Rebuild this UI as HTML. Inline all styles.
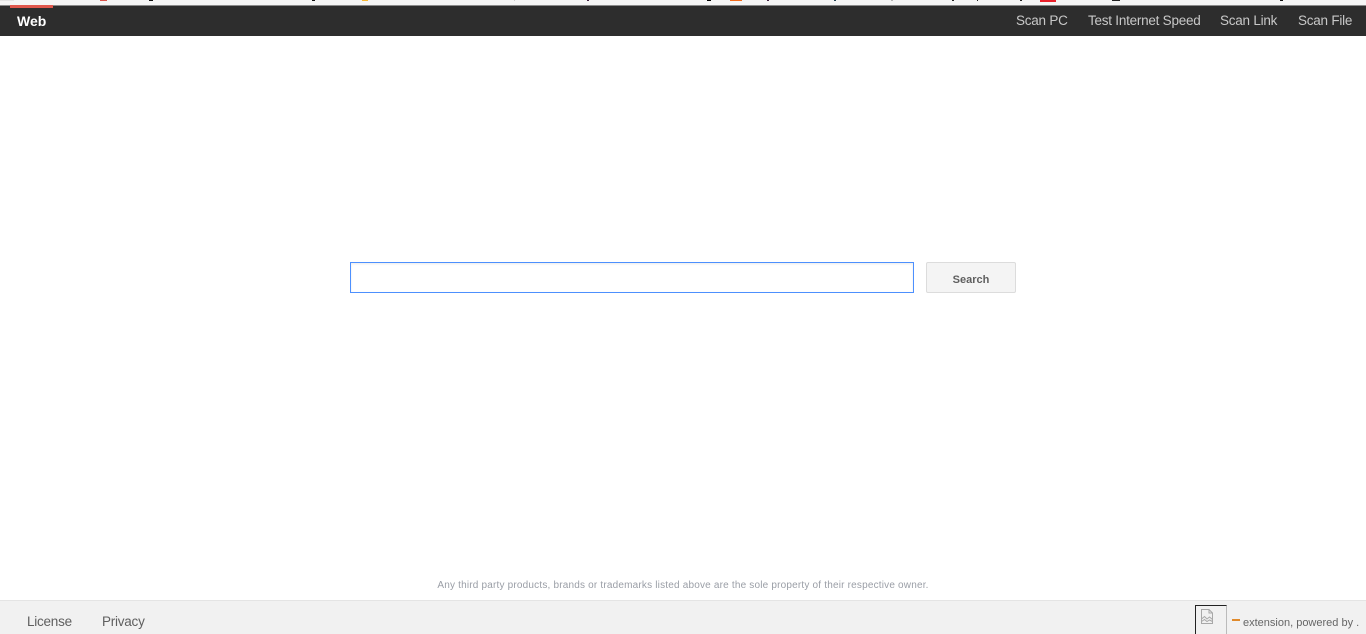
<!DOCTYPE html>
<html>
<head>
<meta charset="utf-8">
<title>Web</title>
<style>
html,body{margin:0;padding:0;width:1366px;height:634px;overflow:hidden;background:#fff;font-family:"Liberation Sans",Arial,sans-serif}
.a{position:absolute}
.s{position:absolute;top:0;height:1px}
#strip{left:0;top:0;width:1366px;height:5px;background:#f5f5f5}
#line{left:0;top:5px;width:1366px;height:1px;background:#8a8a8a}
#nav{left:0;top:6px;width:1366px;height:30px;background:#2d2d2d}
#tab{left:10px;top:5px;width:43px;height:3px;background:#e0574c}
.t{position:absolute;white-space:nowrap}
.n{top:13px;font-size:13.5px;letter-spacing:-.24px;line-height:16px;color:#c8c8c8}
#q{left:350px;top:262px;width:562px;height:29px;border:1px solid #4d90fe;background:#fff;box-shadow:inset 0 1px 2px rgba(0,0,0,.08)}
#b{left:926px;top:262px;width:88px;height:29px;border:1px solid #dcdcdc;border-radius:2px;background:#f4f4f4;color:#5f5f5f;font-size:11px;font-weight:bold;line-height:33px;padding-top:1px;height:28px;text-align:center}
#foot{left:0;top:600px;width:1366px;height:34px;background:#f1f1f1;border-top:1px solid #e4e4e4;box-sizing:border-box}
#legal{left:0;top:580px;width:1366px;text-align:center;font-size:10px;letter-spacing:.19px;line-height:12px;color:#9a9ea6}
.f{top:614px;font-size:13.5px;letter-spacing:-.24px;line-height:16px;color:#5f5f5f}
#ib{left:1195px;top:605px;width:32px;height:29px;box-sizing:border-box;border:1px solid #222;border-right-color:#bbb;border-bottom:0}
</style>
</head>
<body>
<div class="a" id="strip"></div>
<div class="s" style="left:0;width:14px;background:#e4e4e4"></div>
<div class="s" style="left:100px;width:7px;background:#d9534a"></div>
<div class="s" style="left:149px;width:4px;background:#111"></div>
<div class="s" style="left:312px;width:3px;background:#111"></div>
<div class="s" style="left:362px;width:6px;background:#f7b733"></div>
<div class="s" style="left:514px;width:1px;background:#ccc"></div>
<div class="s" style="left:587px;width:2px;background:#402040"></div>
<div class="s" style="left:707px;width:4px;background:#000"></div>
<div class="s" style="left:730px;width:12px;background:#f26a1b"></div>
<div class="s" style="left:767px;width:2px;background:#402040"></div>
<div class="s" style="left:834px;width:2px;background:#204050"></div>
<div class="s" style="left:891px;width:2px;background:#b5b5b5"></div>
<div class="s" style="left:952px;width:2px;background:#222"></div>
<div class="s" style="left:977px;width:1px;background:#222"></div>
<div class="s" style="left:1020px;width:2px;background:#222"></div>
<div class="s" style="left:1040px;width:16px;height:2px;background:#e8202a"></div>
<div class="s" style="left:1112px;width:8px;background:#222"></div>
<div class="s" style="left:1280px;width:3px;background:#111"></div>
<div class="a" id="line"></div>
<div class="a" id="nav"></div>
<div class="a" id="tab"></div>
<div class="t" style="left:17px;top:13px;font-size:14px;line-height:16px;font-weight:bold;color:#fff">Web</div>
<div class="t n" style="left:1016px">Scan PC</div>
<div class="t n" style="left:1088px">Test Internet Speed</div>
<div class="t n" style="left:1220px">Scan Link</div>
<div class="t n" style="left:1298px">Scan File</div>
<div class="a" id="q"></div>
<div class="a" id="b">Search</div>
<div class="a" id="legal">Any third party products, brands or trademarks listed above are the sole property of their respective owner.</div>
<div class="a" id="foot"></div>
<div class="t f" style="left:27px">License</div>
<div class="t f" style="left:102px">Privacy</div>
<div class="a" id="ib"></div>
<svg class="a" style="left:1200px;top:609px" width="14" height="16" viewBox="0 0 14 16" fill="none" stroke="#a8a8a8" stroke-width="1">
<path d="M1.5 .5H9L12.5 4V14.5H1.5Z"/><path d="M9 .5V4H12.5"/><path d="M1.5 10L4.5 7.5L7 10L9.5 8L12.5 10.5"/><path d="M1.5 12.5L4.5 10.5L7 12.5L9.5 11L12.5 12.5"/>
</svg>
<div class="a" style="left:1232px;top:619px;width:8px;height:2px;background:#e08a2c"></div>
<div class="t" style="left:1243px;top:615.5px;font-size:11px;line-height:14px;color:#666">extension, powered by .</div>
</body>
</html>
